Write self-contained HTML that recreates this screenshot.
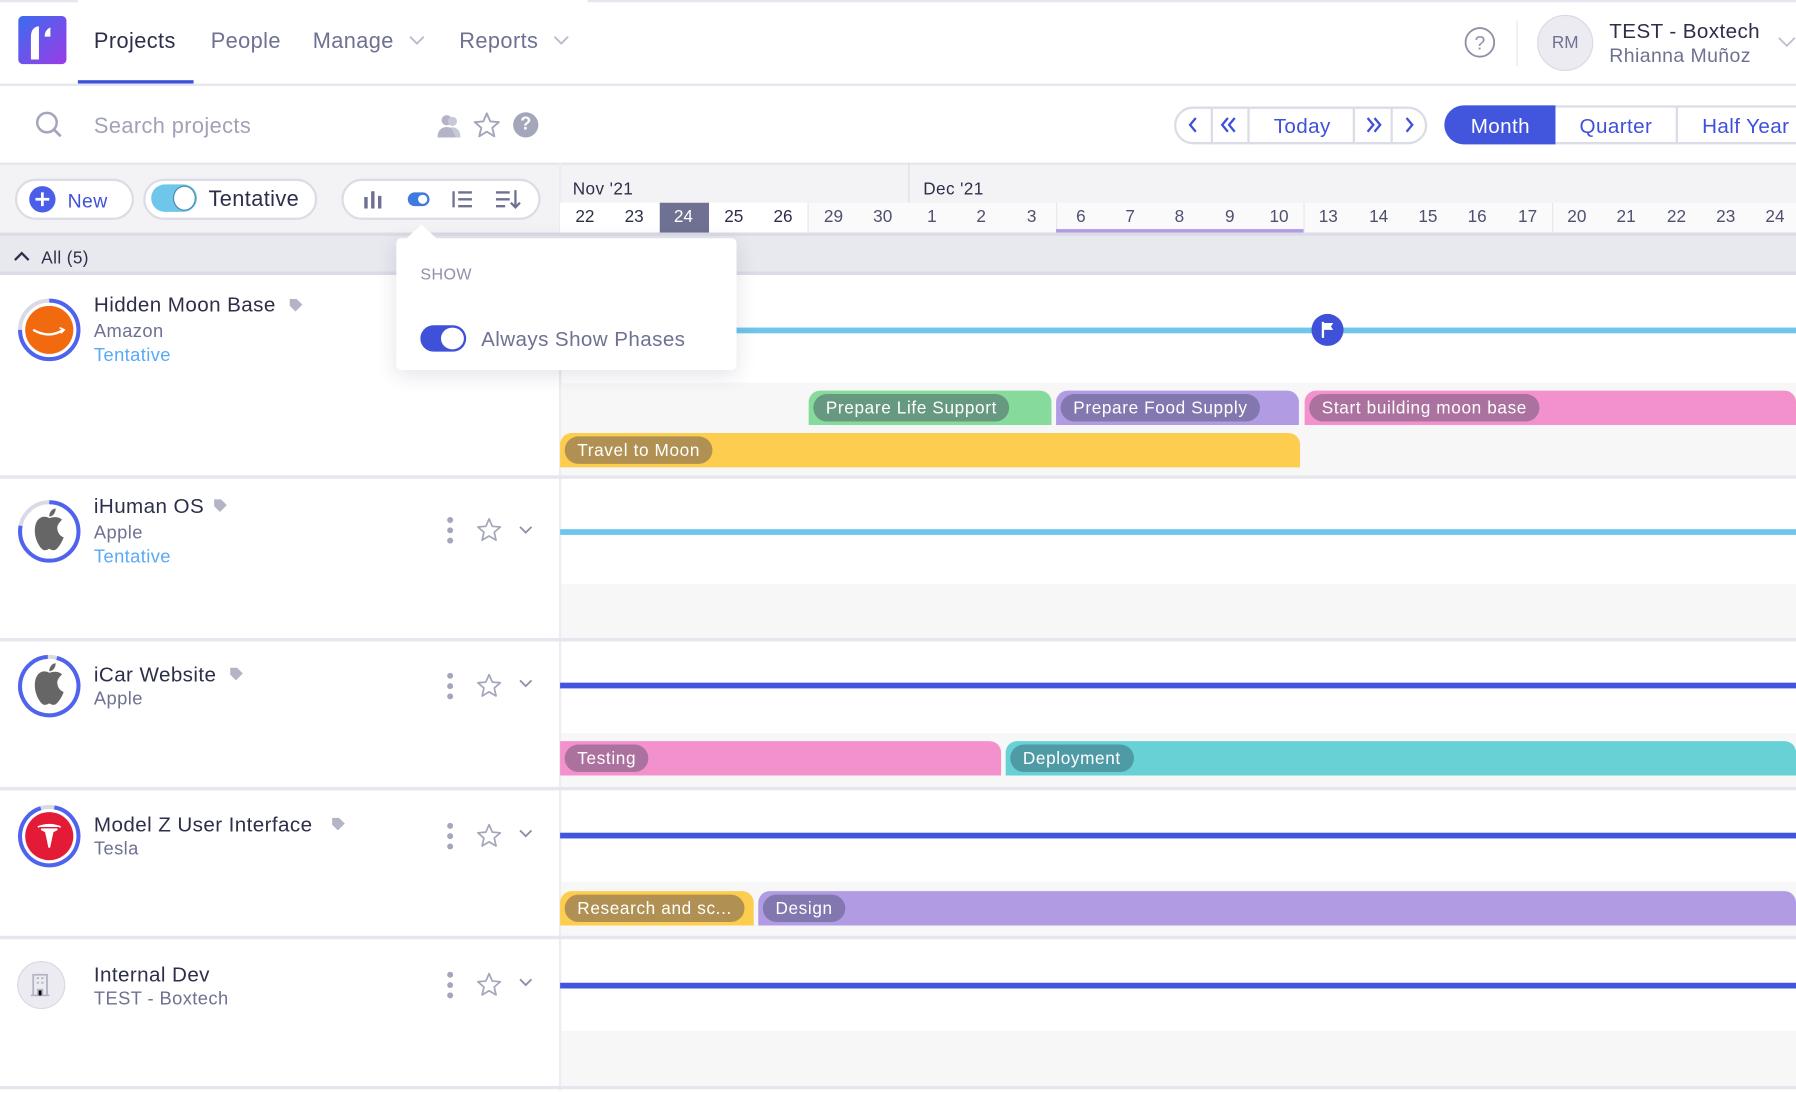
<!DOCTYPE html>
<html><head><meta charset="utf-8"><style>
*{box-sizing:border-box;margin:0;padding:0}
html,body{width:1796px;height:1094px;overflow:hidden;background:#fff}
#w{position:absolute;left:0;top:0;width:1568px;height:955px;transform:scale(1.14541);transform-origin:0 0;font-family:"Liberation Sans",sans-serif;color:#2d2f4a;background:#fff}
.a{position:absolute}
.t{position:absolute;white-space:nowrap;line-height:1;letter-spacing:.35px}
.g{color:#6e7191}
.day{position:absolute;top:177px;height:26px;width:43.3px;text-align:center;font-size:15px;line-height:26px;color:#4e5070}
.ph{position:absolute;height:30px;border-radius:10px 10px 0 0}
.ph span{position:absolute;left:4px;top:3px;height:24px;border-radius:12px;padding:0 11px;color:#fff;font-size:15px;line-height:25px;white-space:nowrap;letter-spacing:.55px}
.pill{position:absolute;background:#fff;border:2px solid #dcdce6;border-radius:20px}
</style></head><body><div id="w">

<div class="a" style="left:0;top:0;width:68px;height:2px;background:#e6e6ee"></div>
<div class="a" style="left:513px;top:0;width:1055px;height:2px;background:#e6e6ee"></div>
<div class="a" style="left:16px;top:14px;width:42px;height:42px;border-radius:4px;background:linear-gradient(135deg,#3b6cf0,#9b3be6)">
<svg width="42" height="42" viewBox="0 0 42 42"><path d="M11 38V18c0-6 3-9 7-9v29z" fill="#fff"/><path d="M23 18c0-4 2-7 5-8v8z" fill="#fff"/></svg></div>
<div class="t" style="left:82px;top:27px;font-size:19px;color:#2d2f4a">Projects</div>
<div class="a" style="left:68px;top:70px;width:101px;height:3px;background:#3f51d9"></div>
<div class="t g" style="left:184px;top:27px;font-size:19px">People</div>
<div class="t g" style="left:273px;top:27px;font-size:19px">Manage</div>
<svg class="a" style="left:357px;top:30px" width="14" height="10"><path d="M1 2l6 6 6-6" stroke="#b8b9cc" stroke-width="1.6" fill="none"/></svg>
<div class="t g" style="left:401px;top:27px;font-size:19px">Reports</div>
<svg class="a" style="left:483px;top:30px" width="14" height="10"><path d="M1 2l6 6 6-6" stroke="#b8b9cc" stroke-width="1.6" fill="none"/></svg>
<svg class="a" style="left:1278px;top:23px" width="28" height="28"><circle cx="14" cy="14" r="12.5" stroke="#8e90a8" stroke-width="1.6" fill="none"/><text x="14" y="20" text-anchor="middle" font-size="17" fill="#8e90a8" font-family="Liberation Sans">?</text></svg>
<div class="a" style="left:1324px;top:18px;width:1px;height:40px;background:#e6e6ee"></div>
<div class="a" style="left:1342px;top:13px;width:49px;height:49px;border-radius:50%;background:#ebebf1;border:1px solid #d8d9e3;text-align:center;line-height:47px;font-size:15px;color:#6e7191">RM</div>
<div class="t" style="left:1405px;top:18px;font-size:18px;color:#2d2f4a">TEST - Boxtech</div>
<div class="t g" style="left:1405px;top:40px;font-size:17px">Rhianna Muñoz</div>
<svg class="a" style="left:1552px;top:31px" width="16" height="12"><path d="M1 2l7 7 7-7" stroke="#c0c1d0" stroke-width="1.6" fill="none"/></svg>
<div class="a" style="left:0;top:73px;width:1568px;height:2px;background:#e6e6ee"></div>

<svg class="a" style="left:30px;top:96px" width="26" height="26"><circle cx="11" cy="11" r="8.5" stroke="#a4a6bb" stroke-width="2.2" fill="none"/><path d="M17 17l6 6" stroke="#a4a6bb" stroke-width="2.4"/></svg>
<div class="t" style="left:82px;top:101px;font-size:19px;color:#a0a2b6">Search projects</div>
<svg class="a" style="left:380px;top:98px" width="24" height="24"><circle cx="10" cy="7" r="4.5" fill="#b3b4c5"/><path d="M2 22c0-6 3-9 8-9s8 3 8 9z" fill="#b3b4c5"/><circle cx="15" cy="8" r="4" fill="#c8c9d6"/><path d="M14 13c5 0 8 3 8 9h-4z" fill="#c8c9d6"/></svg>
<svg class="a" style="left:413px;top:97px" width="24" height="24"><path d="M12 2l3 7 7.5.6-5.7 5 1.8 7.4L12 18l-6.6 4 1.8-7.4L1.5 9.6 9 9z" stroke="#a4a6bb" stroke-width="1.7" fill="none" stroke-linejoin="round"/></svg>
<div class="a" style="left:448px;top:98px;width:22px;height:22px;border-radius:50%;background:#a4a6bb;color:#fff;font-weight:bold;text-align:center;font-size:16px;line-height:22px">?</div>

<div class="a" style="left:1025px;top:93px;width:221px;height:33px;border:2px solid #dcdce6;border-radius:17px;background:#fff"></div>
<div class="a" style="left:1057px;top:93px;width:2px;height:33px;background:#dcdce6"></div>
<div class="a" style="left:1089px;top:93px;width:2px;height:33px;background:#dcdce6"></div>
<div class="a" style="left:1181px;top:93px;width:2px;height:33px;background:#dcdce6"></div>
<div class="a" style="left:1214px;top:93px;width:2px;height:33px;background:#dcdce6"></div>
<svg class="a" style="left:1035px;top:101px" width="14" height="16"><path d="M9 2l-5 6 5 6" stroke="#3f51d9" stroke-width="2" fill="none"/></svg>
<svg class="a" style="left:1063px;top:101px" width="20" height="16"><path d="M9 2l-5 6 5 6M15 2l-5 6 5 6" stroke="#3f51d9" stroke-width="2" fill="none"/></svg>
<div class="t" style="left:1112px;top:101px;font-size:18px;color:#3f51d9">Today</div>
<svg class="a" style="left:1189px;top:101px" width="20" height="16"><path d="M5 2l5 6-5 6M11 2l5 6-5 6" stroke="#3f51d9" stroke-width="2" fill="none"/></svg>
<svg class="a" style="left:1223px;top:101px" width="14" height="16"><path d="M5 2l5 6-5 6" stroke="#3f51d9" stroke-width="2" fill="none"/></svg>
<div class="a" style="left:1261px;top:92px;width:320px;height:34px;border:2px solid #dcdce6;border-radius:17px 0 0 17px;background:#fff"></div>
<div class="a" style="left:1261px;top:92px;width:97px;height:34px;background:#4155dd;border-radius:17px 0 0 17px"></div>
<div class="a" style="left:1463px;top:92px;width:2px;height:34px;background:#dcdce6"></div>
<div class="t" style="left:1284px;top:101px;font-size:18px;color:#fff">Month</div>
<div class="t" style="left:1379px;top:101px;font-size:18px;color:#3f51d9">Quarter</div>
<div class="t" style="left:1486px;top:101px;font-size:18px;color:#3f51d9">Half Year</div>

<div class="a" style="left:0;top:142px;width:1568px;height:63px;background:#f3f3f6;border-top:2px solid #e6e6ee"></div>
<div class="a" style="left:488px;top:142px;width:2px;height:810px;background:#ececf2"></div>
<div class="pill" style="left:13px;top:156px;width:104px;height:36px"></div>
<svg class="a" style="left:25px;top:162px" width="24" height="24"><circle cx="12" cy="12" r="11.5" fill="#4a5ee8"/><path d="M12 6v12M6 12h12" stroke="#fff" stroke-width="2.4"/></svg>
<div class="t" style="left:59px;top:167px;font-size:17px;color:#3f51d9">New</div>
<div class="pill" style="left:125px;top:156px;width:152px;height:36px"></div>
<div class="a" style="left:132px;top:161px;width:40px;height:24px;border-radius:12px;background:#6ec6ea"></div>
<div class="a" style="left:151px;top:162px;width:20px;height:22px;border-radius:50%;background:#fff;border:1.5px solid #4a8aa8"></div>
<div class="t" style="left:182px;top:165px;font-size:19px;color:#2d2f4a">Tentative</div>
<div class="pill" style="left:298px;top:156px;width:174px;height:36px"></div>
<svg class="a" style="left:316px;top:164px" width="20" height="20"><path d="M2 8h3v10H2zM8 3h3v15H8zM14 7h3v11h-3z" fill="#6e7191"/></svg>
<svg class="a" style="left:355px;top:166px" width="22" height="16"><rect x="1" y="2" width="19" height="12" rx="6" fill="#3f7ae0"/><circle cx="14" cy="8" r="4" fill="#fff"/></svg>
<svg class="a" style="left:394px;top:164px" width="20" height="20"><path d="M2 3v14M6 4h12M6 10h12M6 16h12" stroke="#6e7191" stroke-width="2"/></svg>
<svg class="a" style="left:432px;top:164px" width="24" height="20"><path d="M1 4h12M1 10h12M1 16h8M18 2v15M14 13l4 4 4-4" stroke="#6e7191" stroke-width="2" fill="none"/></svg>

<div class="t" style="left:500px;top:158px;font-size:15px;color:#2d2f4a">Nov '21</div>
<div class="a" style="left:793px;top:142px;width:1px;height:35px;background:#dcdce6"></div>
<div class="t" style="left:806px;top:158px;font-size:15px;color:#2d2f4a">Dec '21</div>
<div class="a" style="left:489px;top:177px;width:1079px;height:26px;background:#fafafb"></div>
<div class="a" style="left:489px;top:177px;width:216px;height:26px;background:#fff"></div>
<div class="a" style="left:576px;top:177px;width:43px;height:27px;background:#6e7191"></div>
<div class="a" style="left:705px;top:177px;width:1px;height:26px;background:#e6e6ee"></div>
<div class="a" style="left:922px;top:177px;width:1px;height:26px;background:#e6e6ee"></div>
<div class="a" style="left:1138px;top:177px;width:1px;height:26px;background:#e6e6ee"></div>
<div class="a" style="left:1355px;top:177px;width:1px;height:26px;background:#e6e6ee"></div>
<div class="a" style="left:922px;top:200px;width:216px;height:4px;background:#b19ce3"></div>
<div class="day" style="left:489px;color:#2d2f4a">22</div><div class="day" style="left:532px;color:#2d2f4a">23</div><div class="day" style="left:575px;color:#fff">24</div><div class="day" style="left:619px;color:#2d2f4a">25</div><div class="day" style="left:662px;color:#2d2f4a">26</div>
<div class="day" style="left:706px">29</div><div class="day" style="left:749px">30</div><div class="day" style="left:792px">1</div><div class="day" style="left:835px">2</div><div class="day" style="left:879px">3</div>
<div class="day" style="left:922px">6</div><div class="day" style="left:965px">7</div><div class="day" style="left:1008px">8</div><div class="day" style="left:1052px">9</div><div class="day" style="left:1095px">10</div>
<div class="day" style="left:1138px">13</div><div class="day" style="left:1182px">14</div><div class="day" style="left:1225px">15</div><div class="day" style="left:1268px">16</div><div class="day" style="left:1312px">17</div>
<div class="day" style="left:1355px">20</div><div class="day" style="left:1398px">21</div><div class="day" style="left:1442px">22</div><div class="day" style="left:1485px">23</div><div class="day" style="left:1528px">24</div>
<div class="a" style="left:0;top:203px;width:1568px;height:3px;background:#dcdce6"></div>

<div class="a" style="left:0;top:206px;width:1568px;height:34px;background:#e8e8ef;border-bottom:3px solid #dcdce6"></div>
<svg class="a" style="left:11px;top:218px" width="16" height="12"><path d="M2 9l6-6 6 6" stroke="#2d2f4a" stroke-width="2" fill="none"/></svg>
<div class="t" style="left:36px;top:218px;font-size:15px;color:#2d2f4a">All (5)</div>

<div class="a" style="left:490px;top:334px;width:1078px;height:81px;background:#f7f7f8"></div>
<div class="a" style="left:0;top:415px;width:1568px;height:3px;background:#e6e6ee"></div>
<div class="a" style="left:490px;top:510px;width:1078px;height:47px;background:#f7f7f8"></div>
<div class="a" style="left:0;top:557px;width:1568px;height:3px;background:#e6e6ee"></div>
<div class="a" style="left:490px;top:640px;width:1078px;height:47px;background:#f7f7f8"></div>
<div class="a" style="left:0;top:687px;width:1568px;height:3px;background:#e6e6ee"></div>
<div class="a" style="left:490px;top:770px;width:1078px;height:47px;background:#f7f7f8"></div>
<div class="a" style="left:0;top:817px;width:1568px;height:3px;background:#e6e6ee"></div>
<div class="a" style="left:490px;top:900px;width:1078px;height:48px;background:#f7f7f8"></div>
<div class="a" style="left:0;top:948px;width:1568px;height:3px;background:#e6e6ee"></div>

<!-- Row 1 -->
<svg class="a" style="left:15px;top:260px" width="56" height="56"><circle cx="28" cy="28" r="25.5" stroke="#d9dae5" stroke-width="3.5" fill="none"/><circle cx="28" cy="28" r="25.5" stroke="#4f63ee" stroke-width="3.5" fill="none" stroke-dasharray="120 200" transform="rotate(-90 28 28)"/><circle cx="28" cy="28" r="21" fill="#f26a0f"/><path d="M14 28q14 8 26 0" stroke="#fff" stroke-width="2" fill="none"/><path d="M37 26l4 2-3 3" stroke="#fff" stroke-width="1.5" fill="none"/></svg>
<div class="t" style="left:82px;top:257px;font-size:18px">Hidden Moon Base</div>
<svg class="a" style="left:251px;top:259px" width="14" height="14"><path d="M2 2h6l5 5-6 6-5-5z" fill="#b3b4c5"/></svg>
<div class="t g" style="left:82px;top:282px;font-size:16px">Amazon</div>
<div class="t" style="left:82px;top:303px;font-size:16px;color:#5aa9f5">Tentative</div>
<div class="a" style="left:489px;top:286px;width:1079px;height:5px;background:#6ec6ea"></div>
<div class="a" style="left:1145px;top:274px;width:28px;height:28px;border-radius:50%;background:#3f51d9"></div>
<svg class="a" style="left:1152px;top:280px" width="14" height="16"><path d="M3 1v14" stroke="#fff" stroke-width="2"/><path d="M3 2h9l-2 3 2 3H3z" fill="#fff"/></svg>
<div class="ph" style="left:706px;top:341px;width:212px;background:#86db9c"><span style="background:#66997f">Prepare Life Support</span></div>
<div class="ph" style="left:922px;top:341px;width:212px;background:#b19ce3"><span style="background:#8377b0">Prepare Food Supply</span></div>
<div class="ph" style="left:1139px;top:341px;width:429px;background:#f291cb"><span style="background:#ab729f">Start building moon base</span></div>
<div class="ph" style="left:489px;top:378px;width:646px;background:#fccd4e"><span style="background:#b19153">Travel to Moon</span></div>

<!-- Row 2 -->
<svg class="a" style="left:15px;top:436px" width="56" height="56"><circle cx="28" cy="28" r="25.5" stroke="#d9dae5" stroke-width="3.5" fill="none"/><circle cx="28" cy="28" r="25.5" stroke="#4f63ee" stroke-width="3.5" fill="none" stroke-dasharray="125 200" transform="rotate(-90 28 28)"/><circle cx="28" cy="28" r="21" fill="#fff"/><g transform="translate(28 29) scale(1.4) translate(-28 -28)"><path d="M28 19c-3-2-9-1-9 8 0 6 4 12 6 12s3-1 3-1 1 1 3 1 5-5 6-8c-3-1-4-4-4-6s2-4 3-5c-2-2-5-2-8-1z" fill="#666"/><path d="M28 18c0-3 2-5 4-5 0 3-2 5-4 5z" fill="#666"/></g></svg>
<div class="t" style="left:82px;top:433px;font-size:18px">iHuman OS</div>
<svg class="a" style="left:185px;top:434px" width="14" height="14"><path d="M2 2h6l5 5-6 6-5-5z" fill="#b3b4c5"/></svg>
<div class="t g" style="left:82px;top:458px;font-size:16px">Apple</div>
<div class="t" style="left:82px;top:479px;font-size:16px;color:#5aa9f5">Tentative</div>
<div class="a" style="left:489px;top:462px;width:1079px;height:5px;background:#6ec6ea"></div>

<!-- Row 3 -->
<svg class="a" style="left:15px;top:571px" width="56" height="56"><circle cx="28" cy="28" r="25.5" stroke="#d9dae5" stroke-width="3.5" fill="none"/><circle cx="28" cy="28" r="25.5" stroke="#4f63ee" stroke-width="3.5" fill="none" stroke-dasharray="152 200" transform="rotate(-75 28 28)"/><circle cx="28" cy="28" r="21" fill="#fff"/><g transform="translate(28 29) scale(1.4) translate(-28 -28)"><path d="M28 19c-3-2-9-1-9 8 0 6 4 12 6 12s3-1 3-1 1 1 3 1 5-5 6-8c-3-1-4-4-4-6s2-4 3-5c-2-2-5-2-8-1z" fill="#666"/><path d="M28 18c0-3 2-5 4-5 0 3-2 5-4 5z" fill="#666"/></g></svg>
<div class="t" style="left:82px;top:580px;font-size:18px">iCar Website</div>
<svg class="a" style="left:199px;top:581px" width="14" height="14"><path d="M2 2h6l5 5-6 6-5-5z" fill="#b3b4c5"/></svg>
<div class="t g" style="left:82px;top:603px;font-size:16px">Apple</div>
<div class="a" style="left:489px;top:596px;width:1079px;height:5px;background:#4155dd"></div>
<div class="ph" style="left:489px;top:647px;width:385px;background:#f291cb;border-radius:0 10px 0 0"><span style="background:#ab729f">Testing</span></div>
<div class="ph" style="left:878px;top:647px;width:690px;background:#67d1d6"><span style="background:#4e9aa5">Deployment</span></div>

<!-- Row 4 -->
<svg class="a" style="left:15px;top:702px" width="56" height="56"><circle cx="28" cy="28" r="25.5" stroke="#d9dae5" stroke-width="3.5" fill="none"/><circle cx="28" cy="28" r="25.5" stroke="#4f63ee" stroke-width="3.5" fill="none" stroke-dasharray="148 200" transform="rotate(-80 28 28)"/><circle cx="28" cy="28" r="21" fill="#e31b37"/><path d="M18 20q10-4 20 0M21 22h14l-4 2-3 14-3-14z" stroke="#fff" stroke-width="1.5" fill="#fff"/></svg>
<div class="t" style="left:82px;top:711px;font-size:18px">Model Z User Interface</div>
<svg class="a" style="left:288px;top:712px" width="14" height="14"><path d="M2 2h6l5 5-6 6-5-5z" fill="#b3b4c5"/></svg>
<div class="t g" style="left:82px;top:734px;font-size:16px">Tesla</div>
<div class="a" style="left:489px;top:727px;width:1079px;height:5px;background:#4155dd"></div>
<div class="ph" style="left:489px;top:778px;width:169px;background:#fccd4e"><span style="background:#b19153">Research and sc...</span></div>
<div class="ph" style="left:662px;top:778px;width:906px;background:#b19ce3"><span style="background:#8377b0">Design</span></div>

<!-- Row 5 -->
<div class="a" style="left:15px;top:839px;width:42px;height:42px;border-radius:50%;background:#ebebf1;border:1px solid #d8d9e3"></div>
<svg class="a" style="left:26px;top:849px" width="20" height="22"><path d="M3 20V2h12v18M1 20h16" stroke="#b3b4c5" stroke-width="1.6" fill="none"/><path d="M6 5h2M10 5h2M6 9h2M10 9h2M7 20v-5h4v5" stroke="#b3b4c5" stroke-width="1.6"/></svg>
<div class="t" style="left:82px;top:842px;font-size:18px">Internal Dev</div>
<div class="t g" style="left:82px;top:865px;font-size:16px">TEST - Boxtech</div>
<div class="a" style="left:489px;top:858px;width:1079px;height:5px;background:#4155dd"></div>

<svg class="a" style="left:385px;top:450px" width="84" height="28"><g fill="#a4a6bb"><circle cx="8" cy="4" r="2.6"/><circle cx="8" cy="13" r="2.6"/><circle cx="8" cy="22" r="2.6"/></g><path d="M42 3l2.8 6.5 7 .6-5.3 4.6 1.6 6.9L42 18l-6.1 3.6 1.6-6.9-5.3-4.6 7-.6z" stroke="#a4a6bb" stroke-width="1.5" fill="none" stroke-linejoin="round"/><path d="M69 10l5 5 5-5" stroke="#8e90a8" stroke-width="1.6" fill="none"/></svg>
<svg class="a" style="left:385px;top:586px" width="84" height="28"><g fill="#a4a6bb"><circle cx="8" cy="4" r="2.6"/><circle cx="8" cy="13" r="2.6"/><circle cx="8" cy="22" r="2.6"/></g><path d="M42 3l2.8 6.5 7 .6-5.3 4.6 1.6 6.9L42 18l-6.1 3.6 1.6-6.9-5.3-4.6 7-.6z" stroke="#a4a6bb" stroke-width="1.5" fill="none" stroke-linejoin="round"/><path d="M69 8l5 5 5-5" stroke="#8e90a8" stroke-width="1.6" fill="none"/></svg>
<svg class="a" style="left:385px;top:717px" width="84" height="28"><g fill="#a4a6bb"><circle cx="8" cy="4" r="2.6"/><circle cx="8" cy="13" r="2.6"/><circle cx="8" cy="22" r="2.6"/></g><path d="M42 3l2.8 6.5 7 .6-5.3 4.6 1.6 6.9L42 18l-6.1 3.6 1.6-6.9-5.3-4.6 7-.6z" stroke="#a4a6bb" stroke-width="1.5" fill="none" stroke-linejoin="round"/><path d="M69 8l5 5 5-5" stroke="#8e90a8" stroke-width="1.6" fill="none"/></svg>
<svg class="a" style="left:385px;top:847px" width="84" height="28"><g fill="#a4a6bb"><circle cx="8" cy="4" r="2.6"/><circle cx="8" cy="13" r="2.6"/><circle cx="8" cy="22" r="2.6"/></g><path d="M42 3l2.8 6.5 7 .6-5.3 4.6 1.6 6.9L42 18l-6.1 3.6 1.6-6.9-5.3-4.6 7-.6z" stroke="#a4a6bb" stroke-width="1.5" fill="none" stroke-linejoin="round"/><path d="M69 8l5 5 5-5" stroke="#8e90a8" stroke-width="1.6" fill="none"/></svg>

<div class="a" style="left:346px;top:208px;width:297px;height:115px;background:#fff;border-radius:4px;box-shadow:0 4px 18px rgba(40,40,80,.13)"></div>
<svg class="a" style="left:354px;top:195px" width="28" height="14"><path d="M0 14L14 1l14 13z" fill="#fff"/></svg>
<div class="t" style="left:367px;top:232px;font-size:14px;color:#8e90a8">SHOW</div>
<div class="a" style="left:367px;top:284px;width:40px;height:23px;border-radius:12px;background:#3f51d9"></div>
<div class="a" style="left:385px;top:286px;width:20px;height:19px;border-radius:50%;background:#fff"></div>
<div class="t" style="left:420px;top:287px;font-size:18px;color:#6e7191">Always Show Phases</div>

</div></body></html>
